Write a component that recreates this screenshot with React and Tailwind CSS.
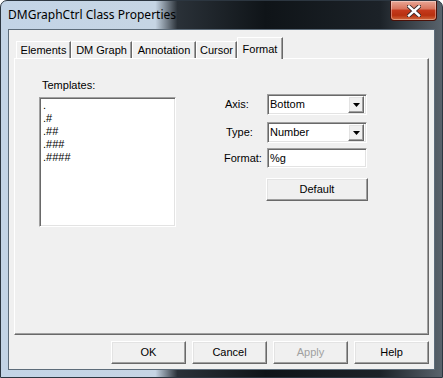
import React from "react";

// classic 3D borders
const sunken =
  "border border-t-[#a0a0a0] border-l-[#a0a0a0] border-r-white border-b-white shadow-[inset_1px_1px_0_#696969,inset_-1px_-1px_0_#e3e3e3]";
const raised =
  "border border-t-white border-l-white border-r-[#696969] border-b-[#696969] shadow-[inset_-1px_-1px_0_#a0a0a0,inset_1px_1px_0_#e3e3e3]";

const tabs = [
  { label: "Elements", w: "w-[55px]" },
  { label: "DM Graph", w: "w-[61px]" },
  { label: "Annotation", w: "w-[64px]" },
  { label: "Cursor", w: "w-[41px]" },
  { label: "Format", w: "w-[46px]", active: true },
];

const templates = [".", ".#", ".##", ".###", ".####"];

function Tab({ label, w, active }) {
  if (active) {
    return (
      <div
        className={`${w} relative z-10 -mb-px flex h-[22px] justify-center border-t border-l border-white border-r border-r-[#696969] bg-[#f0f0f0] pt-[3px] shadow-[inset_-1px_0_0_#a0a0a0]`}
      >
        {label}
      </div>
    );
  }
  return (
    <div
      className={`${w} flex h-[17px] items-center justify-center border-t border-l border-white border-r border-r-[#696969] shadow-[inset_-1px_0_0_#a0a0a0]`}
    >
      {label}
    </div>
  );
}

function Combo({ value }) {
  return (
    <div className={`${sunken} flex h-[21px] w-[100px] items-center justify-between bg-white pl-[2px] pr-[2px]`}>
      <span>{value}</span>
      <div className={`${raised} flex h-[17px] w-[16px] items-center justify-center bg-[#f0f0f0]`}>
        <svg width="7" height="4" viewBox="0 0 7 4">
          <path d="M0 0h7L3.5 4z" fill="#000" />
        </svg>
      </div>
    </div>
  );
}

function Button({ children, disabled, className = "" }) {
  return (
    <div
      className={`${raised} ${className} flex h-[23px] items-center justify-center bg-[#f0f0f0] ${
        disabled ? "text-[#a0a0a0]" : "text-black"
      }`}
    >
      {children}
    </div>
  );
}

export default function App() {
  return (
    <div className="flex h-[378px] w-[443px] flex-col overflow-hidden rounded-t-[7px] border border-[#2c3640] bg-[linear-gradient(90deg,#c3d4e6_0%,#c6d5e4_35%,#2a3138_40%,#0f1418_60%,#1c2228_86%,#59636c_100%)] font-['Liberation_Sans',Arial,sans-serif] text-[11px] text-black">
      {/* title bar */}
      <div className="flex h-[28px] shrink-0 items-start justify-between">
        <div className="pl-[7px] pt-[6px] font-['Noto_Sans',sans-serif] text-[12px] leading-[16px] text-black">
          DMGraphCtrl Class Properties
        </div>
        <div className="mr-[5px] flex h-[20px] w-[47px] items-center justify-center rounded-b-[4px] border border-t-0 border-[#4a1008] bg-[linear-gradient(180deg,#e9a796_0%,#d9765f_40%,#c4391c_50%,#b8300f_75%,#d26a3e_100%)] shadow-[inset_0_0_0_1px_rgba(255,255,255,0.35)]">
          <svg width="14" height="12" viewBox="0 0 14 12">
            <path
              d="M2 1.5 L12 10.5 M12 1.5 L2 10.5"
              stroke="#3a2a2a"
              strokeWidth="4.2"
              strokeLinecap="square"
            />
            <path
              d="M2 1.5 L12 10.5 M12 1.5 L2 10.5"
              stroke="#ffffff"
              strokeWidth="2.4"
              strokeLinecap="square"
            />
          </svg>
        </div>
      </div>

      {/* client area */}
      <div className="mx-[7px] mb-[7px] flex flex-1 flex-col border border-[#5d6c7a] bg-[#f0f0f0] px-[5px] pt-[7px]">
        {/* tabs */}
        <div className="flex h-[21px] items-end pl-[2px]">
          {tabs.map((t) => (
            <Tab key={t.label} {...t} />
          ))}
        </div>

        {/* tab panel */}
        <div className="flex h-[277px] w-[415px] border-t border-l border-white border-r border-b border-r-[#696969] border-b-[#696969] shadow-[inset_-1px_-1px_0_#a0a0a0] pl-[24px] pt-[20px]">
          <div className="flex w-[137px] flex-col">
            <div className="pl-[3px] leading-[13px]">Templates:</div>
            <div className={`${sunken} mt-[5px] h-[130px] bg-white pl-[3px] pt-[1px]`}>
              {templates.map((t) => (
                <div key={t} className="leading-[13px]">
                  {t}
                </div>
              ))}
            </div>
          </div>

          <div className="ml-[48px] mt-[15px] flex flex-col">
            <div className="flex items-center">
              <span className="w-[43px] pl-[1px]">Axis:</span>
              <Combo value="Bottom" />
            </div>
            <div className="mt-[7px] flex items-center">
              <span className="w-[43px] pl-[2px]">Type:</span>
              <Combo value="Number" />
            </div>
            <div className="mt-[5px] flex items-center">
              <span className="w-[43px]">Format:</span>
              <div className={`${sunken} flex h-[20px] w-[100px] items-center bg-white pl-[2px]`}>%g</div>
            </div>
            <div className="mt-[10px] pl-[42px]">
              <Button className="w-[102px] h-[22px]">Default</Button>
            </div>
          </div>
        </div>

        {/* dialog buttons */}
        <div className="mt-[6px] flex justify-end gap-[6px]">
          <Button className="w-[75px]">OK</Button>
          <Button className="w-[75px]">Cancel</Button>
          <Button className="w-[75px]" disabled>
            Apply
          </Button>
          <Button className="w-[75px]">Help</Button>
        </div>
      </div>
    </div>
  );
}
